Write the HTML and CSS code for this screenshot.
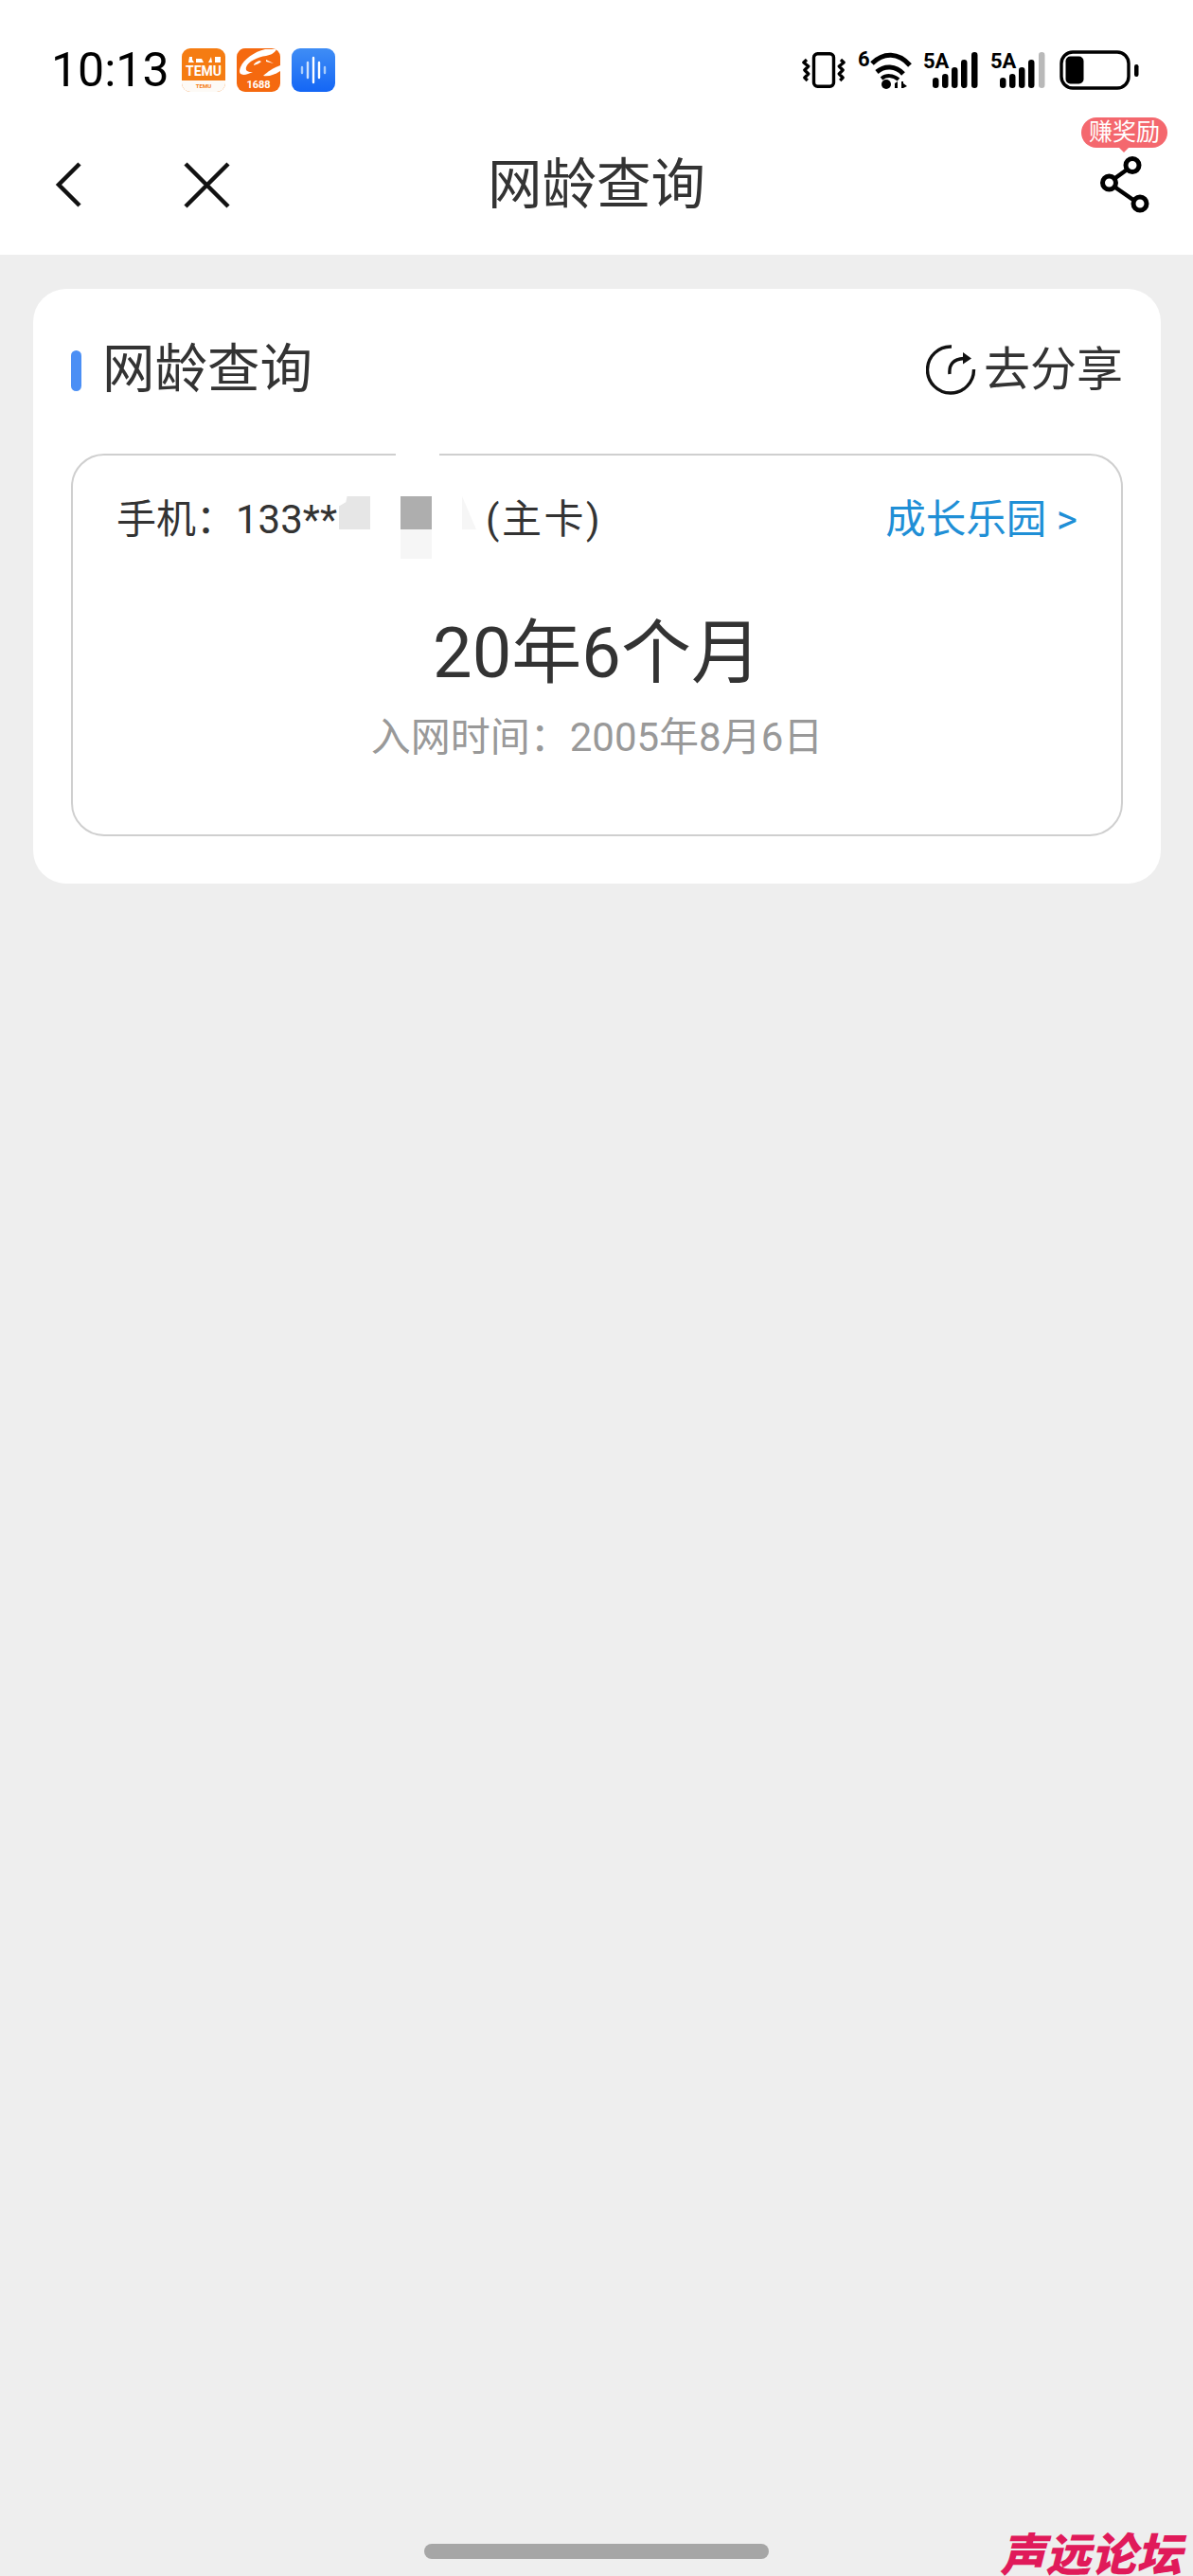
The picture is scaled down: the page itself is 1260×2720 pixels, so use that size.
FILE: index.html
```html
<!DOCTYPE html>
<html lang="zh-CN">
<head>
<meta charset="utf-8">
<title>网龄查询</title>
<link rel="stylesheet" href="styles.css">
</head>
<body>
<div class="page">
  <header class="top">
    <div class="status">
      <div class="status-left">
        <span class="time">10:13</span>
        <svg class="app" viewBox="0 0 46 46"><defs><clipPath id="c1"><rect width="46" height="46" rx="9"/></clipPath></defs><g clip-path="url(#c1)"><rect width="46" height="46" fill="#f57c12"/><path d="M0 34h46v12H0z" fill="#fdfaf6"/><path d="M8 9h3v3l2 3H7zM15 11h6l2 4h-8zM28 15l3-6 1 6zM35 9h6v6h-6z" fill="#fff"/><text x="23" y="29" class="app-t1">TEMU</text><text x="23" y="42" class="app-t2">TEMU</text></g></svg>
        <svg class="app" viewBox="0 0 46 46"><defs><clipPath id="c2"><rect width="46" height="46" rx="9"/></clipPath></defs><g clip-path="url(#c2)"><rect width="46" height="46" fill="#f5690f"/><path d="M30 1C17 4 4 14 3 24c0 6 8 4 14 1-5 0-8-1-7-5 2-6 12-11 21-12 5-1 9-3 11-7z" fill="#fff"/><path d="M46 18c-6 2-14 7-18 11 6 1 12-1 18-5z" fill="#fff"/><path d="M24 13c-3 1-6 3-6 5 3-1 6-2 8-4zM31 12l8 4-8-2z" fill="#fff"/><text x="23" y="42" class="app-t3">1688</text></g></svg>
        <svg class="app" viewBox="0 0 46 46"><defs><linearGradient id="g3" x1="0" y1="0" x2="0" y2="1"><stop offset="0" stop-color="#3f8df5"/><stop offset="1" stop-color="#1466f5"/></linearGradient></defs><rect width="46" height="46" rx="9" fill="url(#g3)"/><g stroke-linecap="round" stroke-width="2.4"><path d="M11 20v6" stroke="#a9cdfb"/><path d="M17 15v16" stroke="#cfe2fd"/><path d="M23 10v26" stroke="#fff"/><path d="M29 15v16" stroke="#fff"/><path d="M35 20v6" stroke="#a9cdfb"/></g></svg>
      </div>
      <div class="status-right">
        <svg class="ic-vib" viewBox="0 0 46 38"><rect x="12.500" y="1.800" width="21" height="34.400" rx="4" fill="none" stroke="#000" stroke-width="3.400"/><path d="M5 8L1.800 11l5 4-4 4 4 4-4 4 3 3M41 8l3.200 3-5 4 4 4-4 4 4 4-3 3" fill="none" stroke="#000" stroke-width="3.200" stroke-linejoin="round"/></svg>
        <svg class="ic-wifi" viewBox="0 0 56 42"><text x="0" y="18" class="sig-t">6</text><path d="M15 15C27 3 43 3 55 17" fill="none" stroke="#000" stroke-width="5"/><path d="M20 24c8-7 20-7 28 2" fill="none" stroke="#000" stroke-width="5"/><path d="M25 31c5-4 12-4 18 1" fill="none" stroke="#000" stroke-width="4"/><circle cx="30" cy="37" r="5"/><path d="M39 36l3-2v7h-3v-3zM46 34h2v2l4 3-4 2h-2z"/></svg>
        <svg class="ic-sig" viewBox="0 0 58 42"><text x="0" y="19" class="sig-t">5A</text><rect x="10" y="29" width="6.500" height="11" rx="3.200"/><rect x="20" y="25" width="6.500" height="15" rx="3.200"/><rect x="30" y="18" width="6.500" height="22" rx="3.200"/><rect x="40" y="10" width="6.500" height="30" rx="3.200"/><rect x="51" y="2" width="6.500" height="38" rx="3.200"/></svg>
        <svg class="ic-sig" viewBox="0 0 58 42"><text x="0" y="19" class="sig-t">5A</text><rect x="10" y="29" width="6.500" height="11" rx="3.200"/><rect x="20" y="25" width="6.500" height="15" rx="3.200"/><rect x="30" y="18" width="6.500" height="22" rx="3.200"/><rect x="40" y="10" width="6.500" height="30" rx="3.200"/><rect x="51" y="2" width="6.500" height="38" rx="3.200" fill="#b9b9b9"/></svg>
        <svg class="ic-bat" viewBox="0 0 84 42"><rect x="2" y="2" width="71" height="38" rx="12" fill="none" stroke="#000" stroke-width="3.400"/><rect x="6.500" y="6.500" width="19" height="29" rx="5"/><rect x="79" y="15" width="4.500" height="13" rx="2.200"/></svg>
      </div>
    </div>
    <nav class="nav">
      <div class="nav-left">
        <svg class="ic-back" viewBox="0 0 30 50"><path d="M27 3L5 25l22 22" fill="none" stroke="#111" stroke-width="4.500"/></svg>
        <svg class="ic-close" viewBox="0 0 49 49"><path d="M2 2l45 45M47 2L2 47" fill="none" stroke="#111" stroke-width="4.500"/></svg>
      </div>
      <h1 class="nav-title">网龄查询</h1>
      <div class="nav-right">
        <span class="badge">赚奖励</span>
        <svg class="ic-share" viewBox="0 0 52 60"><path d="M34 10L9 28l33 23" fill="none" stroke="#000" stroke-width="4.500"/><circle cx="34" cy="9.500" r="7" fill="#fff" stroke="#000" stroke-width="5"/><circle cx="9.500" cy="28" r="7" fill="#fff" stroke="#000" stroke-width="5"/><circle cx="42" cy="50" r="7" fill="#fff" stroke="#000" stroke-width="5"/></svg>
      </div>
    </nav>
  </header>

  <main class="card">
    <div class="card-head">
      <div class="card-title"><i class="bar"></i><span>网龄查询</span></div>
      <div class="share-link">
        <svg class="ic-refresh" viewBox="0 0 54 54"><path d="M27 2A24.500 24.500 0 1 0 50.500 26" fill="none" stroke="#111" stroke-width="3.400"/><path d="M25 31c-1-10 4-16 15-16.500" fill="none" stroke="#111" stroke-width="3.400"/><path d="M39 8l9 6.500-9 6z" fill="#111"/></svg>
        <span>去分享</span>
      </div>
    </div>
    <section class="inner">
      <i class="border-gap"></i>
      <div class="inner-top">
        <div class="phone">手机：<span class="num">133**</span><span class="mask"><i class="m1"></i><i class="m2"></i><i class="m3"></i><i class="m4"></i></span><span class="card-type">(主卡)</span></div>
        <a class="grow">成长乐园 &gt;</a>
      </div>
      <div class="age">20年6个月</div>
      <div class="since">入网时间：2005年8月6日</div>
    </section>
  </main>
  <div class="home-bar"></div>
  <div class="mark">声远论坛</div>
</div>
</body>
</html>
```
FILE: styles.css
```css
* { box-sizing: border-box; }
html, body { margin: 0; padding: 0; }
body {
  width: 1260px;
  height: 2720px;
  overflow: hidden;
  background: #eeeeee;
  font-family: Roboto, "Noto Sans CJK SC", sans-serif;
  color: #333;
}
.page { position: relative; height: 2720px; }
.top { background: #fff; height: 269px; }
.status {
  height: 125px;
  padding: 0 57px 0 54px;
  display: flex;
  justify-content: space-between;
  align-items: flex-start;
}
.status-left { display: flex; align-items: center; padding-top: 48px; }
.time { font-size: 50px; line-height: 52px; color: #000; width: 138px; }
.app { width: 46px; height: 46px; margin-right: 12px; }
.app-t1 { font: 700 14px Roboto, sans-serif; fill: #fff; text-anchor: middle; }
.app-t2 { font: 700 6px Roboto, sans-serif; fill: #f57c12; text-anchor: middle; }
.app-t3 { font: 700 11px Roboto, sans-serif; fill: #fff; text-anchor: middle; }
.status-right { display: flex; align-items: flex-start; padding-top: 52px; }
.sig-t { font: 700 22px Roboto, sans-serif; fill: #000; }
.ic-vib { width: 46px; height: 38px; margin-top: 3px; }
.ic-wifi { width: 56px; height: 42px; margin-left: 13px; overflow: visible; }
.ic-sig { width: 58px; height: 42px; margin: 1px 0 0 13px; overflow: visible; }
.ic-bat { width: 84px; height: 42px; margin: 1px 0 0 15px; }
.nav {
  position: relative;
  height: 144px;
  padding: 0 46px 4px 57px;
  display: flex;
  align-items: center;
  justify-content: space-between;
}
.nav-left { display: flex; align-items: center; gap: 107px; }
.ic-back { width: 30px; height: 50px; }
.ic-close { width: 49px; height: 49px; }
.nav-title {
  position: absolute;
  left: 0;
  right: 0;
  top: 36px;
  margin: 0;
  text-align: center;
  font-size: 57.500px;
  line-height: 70px;
  font-weight: 400;
  color: #333;
}
.nav-right { position: relative; width: 52px; height: 60px; }
.ic-share { width: 52px; height: 60px; display: block; }
.badge {
  position: absolute;
  left: -20px;
  top: -41px;
  width: 91px;
  height: 32px;
  border-radius: 16px;
  background: #f4686e;
  color: #fff;
  font-size: 25px;
  line-height: 32px;
  text-align: center;
}
.badge::after {
  content: "";
  position: absolute;
  left: 38px;
  top: 30px;
  border: 7px solid transparent;
  border-top-color: #f4686e;
  border-bottom-width: 0;
}
.card {
  margin: 36px 34px 0 35px;
  height: 628px;
  background: #fff;
  border-radius: 35px;
  padding: 0 40px;
}
.card-head {
  height: 174px;
  display: flex;
  justify-content: space-between;
  align-items: flex-start;
  padding-top: 51px;
}
.card-title { display: flex; align-items: center; gap: 22px; }
.bar { width: 11px; height: 43px; border-radius: 6px; background: #4b8ff5; }
.card-title span { font-size: 55.500px; line-height: 70px; color: #333; }
.share-link { display: flex; align-items: center; gap: 7px; font-size: 49px; line-height: 70px; color: #333; }
.ic-refresh { width: 54px; height: 54px; }
.inner {
  position: relative;
  height: 404px;
  border: 2px solid #cfcfcf;
  border-radius: 35px;
  padding: 0 46px;
  text-align: center;
}
.border-gap { position: absolute; left: 341px; top: -4px; width: 46px; height: 8px; background: #fff; }
.inner-top {
  height: 136px;
  display: flex;
  justify-content: space-between;
  align-items: center;
}
.phone { font-size: 42px; line-height: 60px; color: #333; display: flex; align-items: center; }
.num { font-size: 42px; }
.mask { position: relative; width: 158px; height: 60px; margin-left: -1px; display: block; }
.mask i { position: absolute; display: block; }
.m1 { left: 3px; top: 5px; width: 33px; height: 35px; background: #e6e6e6; clip-path: polygon(26% 0, 100% 0, 100% 100%, 0 100%, 0 30%, 22% 18%); }
.m2 { left: 68px; top: 5px; width: 33px; height: 35px; background: #aeaeae; }
.m3 { left: 68px; top: 40px; width: 33px; height: 31px; background: #f6f6f6; }
.m4 { left: 133px; top: 5px; width: 15px; height: 35px; background: #f6f6f6; clip-path: polygon(0 0, 100% 100%, 0 100%); }
.card-type { letter-spacing: 2.500px; }
.grow { font-size: 42.500px; line-height: 60px; color: #1f8fd6; }
.age { margin: 28px 0 14px; font-size: 74px; line-height: 90px; color: #333; }
.since { font-size: 42px; line-height: 60px; color: #999; }
.home-bar {
  position: absolute;
  left: 448px;
  top: 2686px;
  width: 364px;
  height: 16px;
  border-radius: 8px;
  background: #a6a6a6;
}
.mark {
  position: absolute;
  right: 12px;
  top: 2670px;
  font-family: "Noto Sans CJK SC", sans-serif;
  font-size: 48px;
  line-height: 48px;
  font-weight: 900;
  font-style: italic;
  color: #e01a5a;
}
```
